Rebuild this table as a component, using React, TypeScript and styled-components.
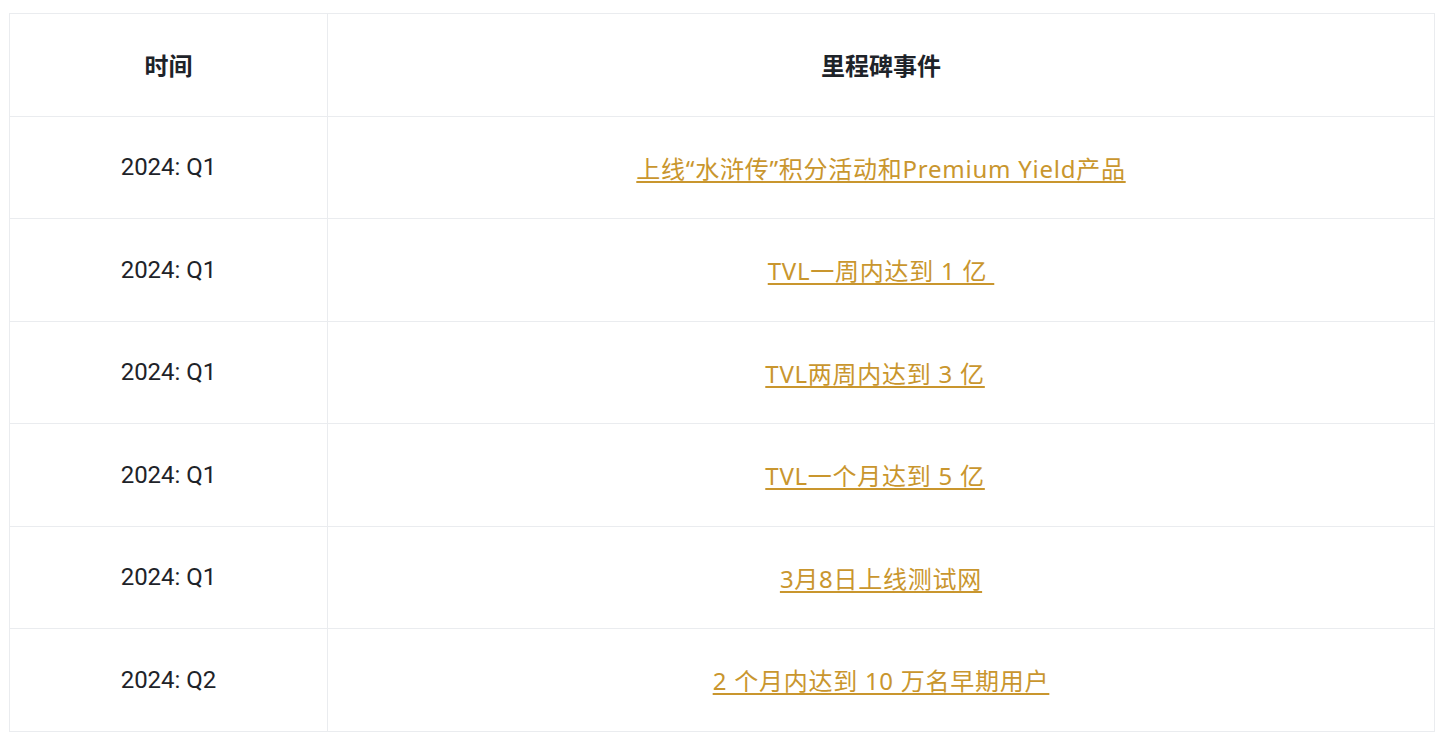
import React from "react";
import styled, { createGlobalStyle } from "styled-components";

const Global = createGlobalStyle`
  html, body { margin: 0; padding: 0; background: #ffffff; }
  body { font-family: Roboto, "Noto Sans CJK SC", sans-serif; }
`;

const Wrapper = styled.div`
  padding: 13px 9px;
`;

const Table = styled.table`
  width: 1426px;
  border-collapse: collapse;
  border: 1px solid #eaecef;
  table-layout: fixed;
  font-family: Roboto, "Noto Sans CJK SC", sans-serif;
  font-size: 24px;
  color: #1e2329;
`;

const Row = styled.tr`
  height: 102.5px;
`;

const HeadCell = styled.th`
  border: 1px solid #eaecef;
  font-weight: 600;
  text-align: center;
  vertical-align: middle;
  padding: 0 12px;
`;

const Cell = styled.td`
  border: 1px solid #eaecef;
  text-align: center;
  vertical-align: middle;
  padding: 0 12px;
  font-weight: 400;
`;

const Link = styled.a`
  font-family: "Noto Sans", "Noto Sans CJK SC", sans-serif;
  color: #c9962e;
  letter-spacing: 0.75px;
  text-decoration: underline;
  text-underline-offset: 3px;
  text-decoration-thickness: 2px;
  white-space: pre;
`;

const Tail = styled.span`
  white-space: pre;
`;

const rows: { time: string; event: string; tail?: boolean }[] = [
  { time: "2024: Q1", event: "上线“水浒传”积分活动和Premium Yield产品" },
  { time: "2024: Q1", event: "TVL一周内达到 1 亿 " },
  { time: "2024: Q1", event: "TVL两周内达到 3 亿", tail: true },
  { time: "2024: Q1", event: "TVL一个月达到 5 亿", tail: true },
  { time: "2024: Q1", event: "3月8日上线测试网" },
  { time: "2024: Q2", event: "2 个月内达到 10 万名早期用户" },
];

export default function App() {
  return (
    <>
      <Global />
      <Wrapper>
        <Table>
          <colgroup>
            <col style={{ width: "318px" }} />
            <col />
          </colgroup>
          <thead>
            <Row>
              <HeadCell>时间</HeadCell>
              <HeadCell>里程碑事件</HeadCell>
            </Row>
          </thead>
          <tbody>
            {rows.map((r, i) => (
              <Row key={i}>
                <Cell>{r.time}</Cell>
                <Cell>
                  <Link href="#">{r.event}</Link>
                  {r.tail && <Tail>{"  "}</Tail>}
                </Cell>
              </Row>
            ))}
          </tbody>
        </Table>
      </Wrapper>
    </>
  );
}
